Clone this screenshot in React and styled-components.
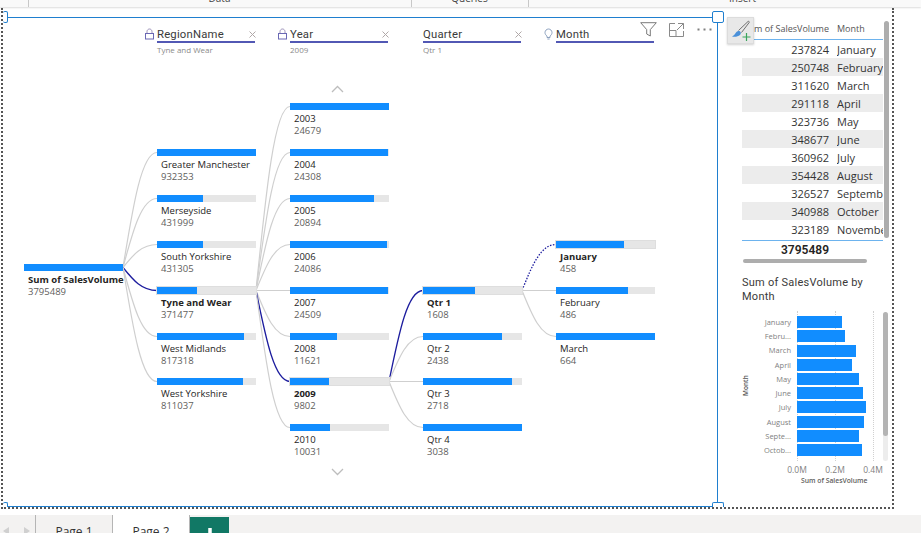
import React from 'react';
import styled, { createGlobalStyle } from 'styled-components';

const BLUE = '#118dff';
const NAVY = '#1c1c9e';
const BODY_FONT = '"Open Sans", "Noto Sans", sans-serif';
const HEAD_FONT = 'Roboto, "Open Sans", sans-serif';

const GlobalStyle = createGlobalStyle`
  html, body {
    margin: 0;
    padding: 0;
    background: #fff;
    overflow: hidden;
  }
  body {
    font-family: ${BODY_FONT};
    color: #252423;
  }
`;

const Page = styled.div`
  width: 921px;
  height: 533px;
  display: flex;
  flex-direction: column;
  overflow: hidden;
`;

const Ribbon = styled.div`
  height: 7px;
  flex: none;
  display: grid;
  grid-template-columns: 28px 383px 117px 1fr;
  background: #f9f9f9;
  box-shadow: 0 1px 2px rgba(0, 0, 0, 0.14);
  position: relative;
  z-index: 2;
`;

const RibbonGroup = styled.div`
  border-right: 1px solid #c8c8c8;
  overflow: hidden;
  font-size: 10px;
  line-height: 12px;
  height: 7px;
  text-align: center;
  color: #444;
  margin-right: -1px;

  span {
    display: block;
    margin-top: -8px;
  }
  &:last-child {
    border-right: none;
    margin-right: 0;
    transform: translateX(18px);
  }
`;

const Frame = styled.div`
  margin: 1px 0 0 1px;
  width: 889px;
  height: 499px;
  flex: none;
  border: 2px dotted #555;
  border-top: none;
  display: flex;
  position: relative;
`;

const Visual = styled.section`
  width: 715px;
  height: 490px;
  margin-top: 9px;
  flex: none;
  box-sizing: border-box;
  border-top: 1px solid #1f7fcf;
  border-right: 1px solid #1f7fcf;
  border-bottom: 1px solid #1f7fcf;
  position: relative;
  display: flex;
  flex-direction: column;
`;

// the two left handles and the two bottom ones are cut by the dotted page frame
const Handle = styled.span`
  position: absolute;
  box-sizing: border-box;
  width: ${p => (p.$left ? '5px' : '12px')};
  height: ${p => (p.$bottom ? '5px' : '12px')};
  background: #fff;
  border: 1px solid #1f7fcf;
  border-left-width: ${p => (p.$left ? 0 : '1px')};
  border-bottom-width: ${p => (p.$bottom ? 0 : '1px')};
  border-radius: ${p => (p.$bottom ? '2px 2px 0 0' : '2px')};
  z-index: 2;
  ${p => p.$top && 'top: -7px;'}
  ${p => p.$bottom && 'bottom: -1px;'}
  ${p => p.$right && 'right: -7px;'}
  ${p => p.$left && 'left: 0;'}
`;

const HeaderRow = styled.div`
  display: flex;
  gap: 35px;
  padding: 9px 0 0 154px;
  height: 33px;
  flex: none;
`;

const LevelHead = styled.div`
  width: 98px;
  position: relative;
`;

const LevelTitle = styled.div`
  display: flex;
  align-items: center;
  justify-content: space-between;
  height: 14px;
  border-bottom: 2px solid #5258b4;
  font-family: ${HEAD_FONT};
  font-size: 11.3px;
  letter-spacing: 0.2px;
  color: #3a3a3a;
`;

const LevelValue = styled.div`
  font-size: 8px;
  line-height: 10px;
  margin-top: 2px;
  color: #8a8a8a;
`;

const LevelIcon = styled.svg`
  position: absolute;
  left: -12px;
  top: 1px;
  width: 9px;
  height: 12px;
`;

const CloseMark = styled.svg`
  width: 7px;
  height: 7px;
  margin: 1px -1px 0 0;
  flex: none;
`;

const VisualTools = styled.div`
  position: absolute;
  top: 4px;
  right: 5px;
  display: flex;
  align-items: center;
  gap: 13px;

  svg:first-child {
    margin-right: -1px;
  }
`;

const Tree = styled.div`
  flex: 1;
  position: relative;
`;

const Links = styled.svg`
  position: absolute;
  inset: 0;
  width: 100%;
  height: 100%;
`;

const Node = styled.div`
  position: absolute;
  width: 99px;
`;

const Track = styled.div`
  height: 7px;
  background: #e6e6e6;
  box-shadow: ${p => (p.$selected ? '0 0 0 1px #dedede' : 'none')};
`;

const Fill = styled.div`
  height: 100%;
  background: ${BLUE};
`;

const NodeLabel = styled.div`
  margin-top: 2px;
  padding-left: 4px;
  font-size: 9.5px;
  line-height: 13px;
  white-space: nowrap;
  color: #252423;
  font-weight: ${p => (p.$selected ? 700 : 400)};
`;

const NodeValue = styled.div`
  padding-left: 4px;
  font-size: 9.5px;
  line-height: 12px;
  color: #605e5c;
`;

const Chevron = styled.svg`
  position: absolute;
  left: 328px;
  width: 13px;
  height: 8px;
  top: ${p => p.$top}px;
`;

const SidePanel = styled.aside`
  flex: 1;
  position: relative;
  padding: 13px 0 0 24px;
  min-width: 0;
`;

const PaintButton = styled.button`
  position: absolute;
  left: 9px;
  top: 9px;
  width: 27px;
  height: 27px;
  padding: 0;
  border: 1px solid #dcdcdc;
  background: #e8e8e8;
  box-shadow: 0 1px 2px rgba(0, 0, 0, 0.18);
  display: flex;
  align-items: center;
  justify-content: center;
`;

const TableBlock = styled.div`
  display: flex;
  gap: 1px;
`;

const Table = styled.div`
  width: 141px;
  flex: none;
  overflow: hidden;
`;

const TableRow = styled.div`
  display: grid;
  grid-template-columns: 87px 1fr;
  column-gap: 8px;
  height: 18px;
  align-items: center;
  font-size: 11px;
  white-space: nowrap;
  color: #333;
  background: ${p => (p.$striped ? '#ececec' : 'transparent')};
`;

const TableHead = styled(TableRow)`
  font-size: 9px;
  height: 14px;
  padding-bottom: 4px;
  color: #555;
  border-bottom: 1px solid #6db3ee;
`;

const HeadCell = styled.div`
  direction: rtl;
  overflow: hidden;
`;

const NumCell = styled.div`
  text-align: right;
`;

const TextCell = styled.div`
  overflow: hidden;
`;

const TotalRow = styled(TableRow)`
  font-family: ${HEAD_FONT};
  font-weight: 600;
  font-size: 12px;
  border-top: 1px solid #6db3ee;
  margin-top: 2px;
  height: 17px;
  color: #252423;
`;

const VScroll = styled.div`
  width: 5px;
  height: 217px;
  background: #adadad;
  border-radius: 3px;
  flex: none;
`;

const HScroll = styled.div`
  width: 124px;
  height: 4px;
  margin: 1px 0 0 1px;
  background: #adadad;
  border-radius: 2px;
`;

const ChartTitle = styled.h2`
  margin: 13px 0 0;
  width: 135px;
  font-family: ${HEAD_FONT};
  font-size: 11px;
  font-weight: 400;
  line-height: 14px;
  letter-spacing: 0.25px;
  color: #3b3a39;
`;

const ChartBlock = styled.div`
  display: flex;
  margin-top: 7px;
  position: relative;
  height: 150px;
`;

const YTitle = styled.div`
  width: 7px;
  flex: none;
  writing-mode: vertical-rl;
  transform: rotate(180deg);
  text-align: center;
  font-size: 6.5px;
  font-weight: 600;
  line-height: 7px;
  color: #555;
`;

const YLabels = styled.div`
  width: 42px;
  flex: none;
  padding-top: 4px;
`;

const YLabel = styled.div`
  height: 14.22px;
  line-height: 14px;
  text-align: right;
  font-size: 7.5px;
  white-space: nowrap;
  color: #7f7f7f;
`;

const Plot = styled.div`
  margin-left: 6px;
  width: 86px;
  flex: none;
  padding-top: 4px;
  position: relative;
`;

const GridLine = styled.span`
  position: absolute;
  top: 0;
  bottom: 0;
  border-left: 1px dotted #d0d0d0;
`;

const BarRow = styled.div`
  height: 14.22px;
  display: flex;
  align-items: center;
  position: relative;
`;

const Bar = styled.div`
  height: 12px;
  background: ${BLUE};
`;

const ChartScroll = styled.div`
  position: absolute;
  left: 141px;
  top: 1px;
  width: 5px;
  height: 149px;
  border-radius: 3px;
  background: #ededed;

  &::before {
    content: '';
    display: block;
    height: 124px;
    border-radius: 3px;
    background: #b4b4b4;
  }
`;

const XTicks = styled.div`
  display: flex;
  margin: 3px 0 0 36px;
  width: 114px;
`;

const XTick = styled.div`
  width: 38px;
  text-align: center;
  font-size: 8.5px;
  line-height: 11px;
  color: #7f7f7f;
`;

const XTitle = styled.div`
  margin: 1px 0 0 59px;
  font-size: 6.8px;
  line-height: 9px;
  font-weight: 600;
  color: #605e5c;
  white-space: nowrap;
`;

const TabBar = styled.nav`
  margin-top: 6px;
  flex: 1;
  display: flex;
  background: #f3f2f1;
`;

const TabArrows = styled.div`
  width: 36px;
  flex: none;
  box-sizing: border-box;
  border-right: 1px solid #b5b5b5;
  display: flex;
  gap: 15px;
  padding: 12px 0 0 3px;
`;

const Tab = styled.div`
  width: 76px;
  flex: none;
  padding-top: 9px;
  text-align: center;
  font-size: 12px;
  line-height: 16px;
  color: #333;
  border-right: 1px solid #b5b5b5;
  background: ${p => (p.$active ? '#fff' : 'transparent')};
`;

const AddTab = styled.div`
  width: 39px;
  margin-top: 2px;
  padding-top: 11px;
  background: #117865;
  display: flex;
  justify-content: center;
`;

// top of each bar in page pixels, kept as pixels because the tree is a free canvas
const ORIGIN = { x: 3, y: 60 };

const root = { x: 24, y: 264, label: 'Sum of SalesVolume', value: 3795489, pct: 100, selected: true };
const regions = [
  { y: 149, label: 'Greater Manchester', value: 932353, pct: 100 },
  { y: 195, label: 'Merseyside', value: 431999, pct: 46.5 },
  { y: 241, label: 'South Yorkshire', value: 431305, pct: 46.5 },
  { y: 287, label: 'Tyne and Wear', value: 371477, pct: 40, selected: true },
  { y: 333, label: 'West Midlands', value: 817318, pct: 88 },
  { y: 378, label: 'West Yorkshire', value: 811037, pct: 87 },
].map(n => ({ ...n, x: 157 }));
const years = [
  { y: 103, label: '2003', value: 24679, pct: 100 },
  { y: 149, label: '2004', value: 24308, pct: 98.5 },
  { y: 195, label: '2005', value: 20894, pct: 84.7 },
  { y: 241, label: '2006', value: 24086, pct: 97.6 },
  { y: 287, label: '2007', value: 24509, pct: 99.3 },
  { y: 333, label: '2008', value: 11621, pct: 47 },
  { y: 378, label: '2009', value: 9802, pct: 39.7, selected: true },
  { y: 424, label: '2010', value: 10031, pct: 40.6 },
].map(n => ({ ...n, x: 290 }));
const quarters = [
  { y: 287, label: 'Qtr 1', value: 1608, pct: 53, selected: true },
  { y: 333, label: 'Qtr 2', value: 2438, pct: 80 },
  { y: 378, label: 'Qtr 3', value: 2718, pct: 89.5 },
  { y: 424, label: 'Qtr 4', value: 3038, pct: 100 },
].map(n => ({ ...n, x: 423 }));
const months = [
  { y: 241, label: 'January', value: 458, pct: 69, selected: true },
  { y: 287, label: 'February', value: 486, pct: 73 },
  { y: 333, label: 'March', value: 664, pct: 100 },
].map(n => ({ ...n, x: 556 }));

const levels = [[root], regions, years, quarters, months];

const tableRows = [
  [237824, 'January'],
  [250748, 'February'],
  [311620, 'March'],
  [291118, 'April'],
  [323736, 'May'],
  [348677, 'June'],
  [360962, 'July'],
  [354428, 'August'],
  [326527, 'September'],
  [340988, 'October'],
  [323189, 'November'],
];

const chartLabels = ['January', 'Febru...', 'March', 'April', 'May', 'June', 'July', 'August', 'Septe...', 'Octob...'];

const linkPath = (from, to) => {
  const x0 = from.x + 99 - ORIGIN.x;
  const y0 = from.y + 3.5 - ORIGIN.y;
  const x1 = to.x - ORIGIN.x;
  const y1 = to.y + 3.5 - ORIGIN.y;
  const dx = x1 - x0;
  return `M${x0} ${y0} C${x0 + dx * 0.3} ${y0 + (y1 - y0) * 0.55} ${x0 + dx * 0.55} ${y1} ${x1} ${y1}`;
};

function TreeLinks() {
  return (
    <Links>
      {levels.slice(1).map((level, i) => {
        const parent = levels[i].find(n => n.selected);
        return level.map(child => (
          <path
            key={child.label}
            d={linkPath(parent, child)}
            fill="none"
            stroke={child.selected ? NAVY : '#cfcfcf'}
            strokeWidth={child.selected ? 1.3 : 1.2}
            strokeDasharray={child.label === 'January' ? '1.5 1.5' : undefined}
          />
        ));
      })}
    </Links>
  );
}

function TreeNode({ node }) {
  return (
    <Node style={{ left: node.x - ORIGIN.x, top: node.y - ORIGIN.y }}>
      <Track $selected={node.selected && node.label !== 'Sum of SalesVolume'}>
        <Fill style={{ width: `${node.pct}%` }} />
      </Track>
      <NodeLabel $selected={node.selected}>{node.label}</NodeLabel>
      <NodeValue>{node.value}</NodeValue>
    </Node>
  );
}

function LockIcon() {
  return (
    <LevelIcon viewBox="0 0 9 12" fill="none">
      <path d="M2 5.5V3.6C2 2.2 3.1 1 4.5 1S7 2.2 7 3.6v1.9" stroke="#9a8fb8" strokeWidth="1" />
      <rect x="0.5" y="5.5" width="8" height="5.5" stroke="#6a68b4" strokeWidth="1" />
    </LevelIcon>
  );
}

function BulbIcon() {
  return (
    <LevelIcon viewBox="0 0 9 12" fill="none">
      <path d="M3 8C1.8 7.2 1 6 1 4.6 1 2.6 2.6 1 4.5 1S8 2.6 8 4.6C8 6 7.2 7.2 6 8v1.5H3V8z" stroke="#8197b8" strokeWidth="0.9" />
      <path d="M3.4 11h2.2" stroke="#8197b8" strokeWidth="0.9" />
    </LevelIcon>
  );
}

function Close() {
  return (
    <CloseMark viewBox="0 0 7 7">
      <path d="M0.5 0.5l6 6M6.5 0.5l-6 6" stroke="#b0a8a8" strokeWidth="1" />
    </CloseMark>
  );
}

function Level({ title, value, icon, closable }) {
  return (
    <LevelHead>
      {icon}
      <LevelTitle>
        {title}
        {closable && <Close />}
      </LevelTitle>
      <LevelValue>{value}</LevelValue>
    </LevelHead>
  );
}

function Tools() {
  return (
    <VisualTools>
      <svg width="17" height="15" viewBox="0 0 17 15" fill="none">
        <path d="M0.7 0.7h15.6L10.3 7.6V14l-3.6-2V7.6L0.7 0.7z" stroke="#7a7a7a" strokeWidth="1" />
      </svg>
      <svg width="15" height="14" viewBox="0 0 15 14" fill="none" stroke="#8a8a8a" strokeWidth="1">
        <path d="M6 0.5H0.5v13h14V8" />
        <path d="M0.5 7.5H7v6" />
        <path d="M9 0.5h5.5V6M14.5 0.5L8 7" />
      </svg>
      <svg width="15" height="3" viewBox="0 0 15 3" fill="#7f7f7f">
        <rect x="0.5" y="0.5" width="2" height="2" />
        <rect x="6.5" y="0.5" width="2" height="2" />
        <rect x="12.5" y="0.5" width="2" height="2" />
      </svg>
    </VisualTools>
  );
}

function BrushIcon() {
  return (
    <svg width="24" height="24" viewBox="0 0 24 24" fill="none">
      <path d="M3 17.5c2.5.5 6 .4 8-1.5 1.2-1.2 1.1-2.7.1-3.5-1-.8-2.6-.6-3.7.6C6 14.600 5.5 16.600 3 17.5z" fill="#4a90d9" />
      <path d="M9.5 11.5L19 2.5c.8-.5 1.600.2 1.200 1L12.500 13.500" stroke="#707070" strokeWidth="1" />
      <path d="M17.500 14v8M13.500 18h8" stroke="#3ba55c" strokeWidth="1.200" />
    </svg>
  );
}

function DataTable() {
  return (
    <div>
      <TableBlock>
        <Table>
          <TableHead>
            <HeadCell>Sum of SalesVolume</HeadCell>
            <TextCell>Month</TextCell>
          </TableHead>
          {tableRows.map(([value, month], i) => (
            <TableRow key={month} $striped={i % 2 === 1}>
              <NumCell>{value}</NumCell>
              <TextCell>{month}</TextCell>
            </TableRow>
          ))}
          <TotalRow>
            <NumCell>3795489</NumCell>
            <span />
          </TotalRow>
        </Table>
        <VScroll />
      </TableBlock>
      <HScroll />
    </div>
  );
}

function MonthChart() {
  return (
    <>
      <ChartTitle>Sum of SalesVolume by Month</ChartTitle>
      <ChartBlock>
        <YTitle>Month</YTitle>
        <YLabels>
          {chartLabels.map(l => (
            <YLabel key={l}>{l}</YLabel>
          ))}
        </YLabels>
        <Plot>
          <GridLine style={{ left: 0 }} />
          <GridLine style={{ left: 38 }} />
          <GridLine style={{ left: 76 }} />
          {tableRows.slice(0, 10).map(([value, month]) => (
            <BarRow key={month}>
              <Bar style={{ width: (value / 400000) * 76 }} />
            </BarRow>
          ))}
        </Plot>
        <ChartScroll />
      </ChartBlock>
      <XTicks>
        <XTick>0.0M</XTick>
        <XTick>0.2M</XTick>
        <XTick>0.4M</XTick>
      </XTicks>
      <XTitle>Sum of SalesVolume</XTitle>
    </>
  );
}

export default function App() {
  return (
    <Page>
      <GlobalStyle />
      <Ribbon>
        <RibbonGroup />
        <RibbonGroup><span>Data</span></RibbonGroup>
        <RibbonGroup><span>Queries</span></RibbonGroup>
        <RibbonGroup><span>Insert</span></RibbonGroup>
      </Ribbon>
      <Frame>
        <Visual>
          <Handle $top $left />
          <Handle $top $right />
          <Handle $bottom $left />
          <Handle $bottom $right />
          <HeaderRow>
            <Level title="RegionName" value="Tyne and Wear" icon={<LockIcon />} closable />
            <Level title="Year" value="2009" icon={<LockIcon />} closable />
            <Level title="Quarter" value="Qtr 1" closable />
            <Level title="Month" icon={<BulbIcon />} />
          </HeaderRow>
          <Tools />
          <Tree>
            <TreeLinks />
            <Chevron $top={25} viewBox="0 0 13 8" fill="none">
              <path d="M1 7l5.5-5.5L12 7" stroke="#bdbdbd" strokeWidth="1.3" />
            </Chevron>
            <Chevron $top={408} viewBox="0 0 13 8" fill="none">
              <path d="M1 1l5.5 5.5L12 1" stroke="#bdbdbd" strokeWidth="1.3" />
            </Chevron>
            {levels.flat().map(node => (
              <TreeNode key={`${node.x}-${node.label}`} node={node} />
            ))}
          </Tree>
        </Visual>
        <SidePanel>
          <PaintButton aria-label="Format">
            <BrushIcon />
          </PaintButton>
          <DataTable />
          <MonthChart />
        </SidePanel>
      </Frame>
      <TabBar>
        <TabArrows>
          <svg width="6" height="8" viewBox="0 0 6 8"><path d="M6 0v8L0 4z" fill="#d0d0d0" /></svg>
          <svg width="6" height="8" viewBox="0 0 6 8"><path d="M0 0v8l6-4z" fill="#d0d0d0" /></svg>
        </TabArrows>
        <Tab>Page 1</Tab>
        <Tab $active>Page 2</Tab>
        <AddTab>
          <svg width="14" height="14" viewBox="0 0 14 14"><path d="M7 0v14M0 7h14" stroke="#fff" strokeWidth="3.5" /></svg>
        </AddTab>
      </TabBar>
    </Page>
  );
}
